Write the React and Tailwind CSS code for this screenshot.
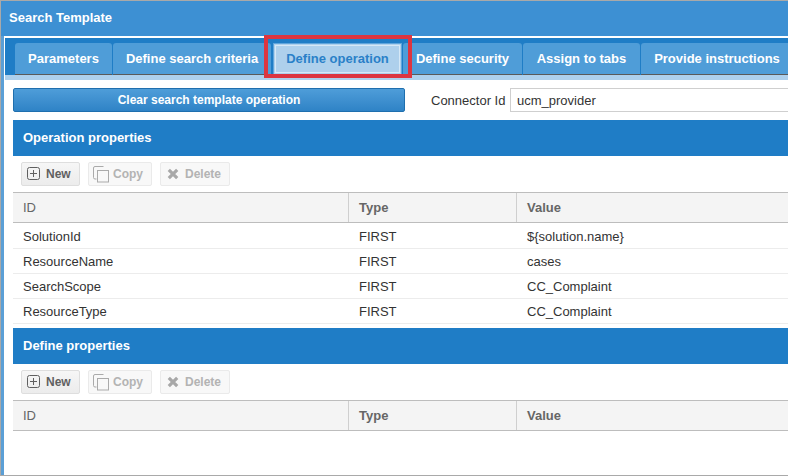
import React from "react";

const tabs = [
  ["Parameters", "w-[97px]"],
  ["Define search criteria", "w-[158px]"],
];
const tabsAfter = [
  ["Define security", "w-[119px]"],
  ["Assign to tabs", "w-[117px]"],
  ["Provide instructions", "w-[152px]"],
];

function Tab({ label, w }) {
  return (
    <div className={`${w} h-[32px] shrink-0 mr-px flex items-center justify-center bg-[#4f9dd8] border-b border-[#5a5a5a] rounded-t-[3px] text-white font-bold text-[13px]`}>
      {label}
    </div>
  );
}

const NewIcon = () => (
  <svg width="14" height="14" viewBox="0 0 14 14" fill="none" stroke="#5f5f5f" strokeWidth="1">
    <rect x="0.5" y="0.5" width="12" height="12" rx="2" />
    <path d="M6.5 3v7M3 6.5h7" />
  </svg>
);
const CopyIcon = () => (
  <svg width="18" height="18" viewBox="0 0 18 18" fill="none" stroke="#aaa" strokeWidth="1">
    <path d="M11.5 1.5H3a1.5 1.5 0 0 0-1.5 1.5v9.5a1.5 1.5 0 0 0 1.5 1.5h1.5" />
    <rect x="5.5" y="5.5" width="11" height="11.5" fill="#f8f8f8" />
  </svg>
);
const DeleteIcon = () => (
  <svg width="12" height="12" viewBox="0 0 12 12" fill="none" stroke="#a8a8a8" strokeWidth="3.2">
    <path d="M1.8 1.8l8.4 8.4M10.2 1.8l-8.4 8.4" />
  </svg>
);

function Toolbar() {
  return (
    <div className="h-[36px] pl-[8px] pt-[6px] flex gap-[8px] bg-white">
      <div className="w-[59px] h-[24px] flex items-center pl-[5px] gap-[5px] border border-[#dedede] rounded-[2px] bg-gradient-to-b from-[#f6f6f6] to-[#ececec] text-[#606060] font-bold text-[12px]">
        <NewIcon /> New
      </div>
      <div className="w-[64px] h-[24px] flex items-center pl-[3px] gap-[3px] border border-[#eaeaea] rounded-[2px] bg-[#f8f8f8] text-[#b3b3b3] font-bold text-[12px]">
        <CopyIcon /> Copy
      </div>
      <div className="w-[70px] h-[24px] flex items-center pl-[6px] gap-[6px] border border-[#eaeaea] rounded-[2px] bg-[#f8f8f8] text-[#b3b3b3] font-bold text-[12px]">
        <DeleteIcon /> Delete
      </div>
    </div>
  );
}

function TableHeader() {
  return (
    <div className="h-[31px] shrink-0 grid grid-cols-[335px_168px_1fr] bg-[#f4f4f4] border-y border-[#bdbdbd] text-[#666] font-bold text-[13px]">
      <div className="pl-[10px] flex items-center font-normal">ID</div>
      <div className="pl-[10px] flex items-center border-l border-[#cfcfcf]">Type</div>
      <div className="pl-[10px] flex items-center border-l border-[#cfcfcf]">Value</div>
    </div>
  );
}

function Row({ id, type, value, h }) {
  return (
    <div className={`${h} pt-[2px] grid grid-cols-[335px_168px_1fr] items-center border-b border-[#ececec] text-[#333] text-[13px]`}>
      <div className="pl-[10px]">{id}</div>
      <div className="pl-[11px]">{type}</div>
      <div className="pl-[11px]">{value}</div>
    </div>
  );
}

function SectionHeader({ children }) {
  return (
    <div className="h-[36px] shrink-0 flex items-center pl-[10px] bg-[#1f7dc6] text-white font-bold text-[13px]">
      {children}
    </div>
  );
}

export default function App() {
  return (
    <div className="relative w-[788px] h-[476px] overflow-hidden bg-white flex flex-col border-t border-b border-l border-[#a9a9a9] font-['Liberation_Sans',Arial,sans-serif]">
      <div className="h-[35px] shrink-0 flex items-center pl-[8px] pb-[2px] bg-[#3d90d3] text-white font-bold text-[13px]">
        Search Template
      </div>
      <div className="flex-1 flex flex-col border-l-[3px] border-[#5b9fd6] pl-px pt-[2px] min-h-0">
        <div className="shrink-0 h-[42px] bg-[#1f7dc6] flex flex-col">
          <div className="flex pl-[10px] pt-[5px] overflow-hidden">
            {tabs.map(([l, w]) => <Tab key={l} label={l} w={w} />)}
            <div className="w-px shrink-0" />
            <div className="w-[129px] h-[32px] shrink-0 mr-px p-px bg-[#aed0ec] border border-[#5fa5dc] flex items-center justify-center">
              <div className="w-full h-full flex items-center justify-center border border-[#d6e8f6] text-[#2a80c8] font-bold text-[13px]">
                Define operation
              </div>
            </div>
            {tabsAfter.map(([l, w]) => <Tab key={l} label={l} w={w} />)}
          </div>
          <div className="h-[5px] bg-[#aed0ec]" />
        </div>
        <div className="flex-1 pl-[8px] flex flex-col min-h-0">
          <div className="h-[40px] shrink-0 flex items-center">
            <div className="w-[392px] h-[24px] shrink-0 flex items-center justify-center rounded-[2px] border border-[#1f6fae] bg-gradient-to-b from-[#4e9dd9] to-[#2f83c6] text-white font-bold text-[12px]">
              Clear search template operation
            </div>
            <div className="ml-[26px] w-[79px] shrink-0 pt-px text-[#333] text-[13px]">Connector Id</div>
            <div className="w-[280px] h-[24px] shrink-0 flex items-center pl-[6px] pt-px bg-white border border-[#cfcfcf] text-[#333] text-[13px]">
              ucm_provider
            </div>
          </div>
          <SectionHeader>Operation properties</SectionHeader>
          <Toolbar />
          <TableHeader />
          <Row h="h-[26px]" id="SolutionId" type="FIRST" value="${solution.name}" />
          <Row h="h-[25px]" id="ResourceName" type="FIRST" value="cases" />
          <Row h="h-[25px]" id="SearchScope" type="FIRST" value="CC_Complaint" />
          <Row h="h-[25px]" id="ResourceType" type="FIRST" value="CC_Complaint" />
          <div className="h-[4px] shrink-0" />
          <SectionHeader>Define properties</SectionHeader>
          <Toolbar />
          <TableHeader />
        </div>
      </div>
      <div className="absolute left-[263px] top-[34px] w-[148px] h-[43px] border-[4px] border-[#dc3540] pointer-events-none" />
    </div>
  );
}
